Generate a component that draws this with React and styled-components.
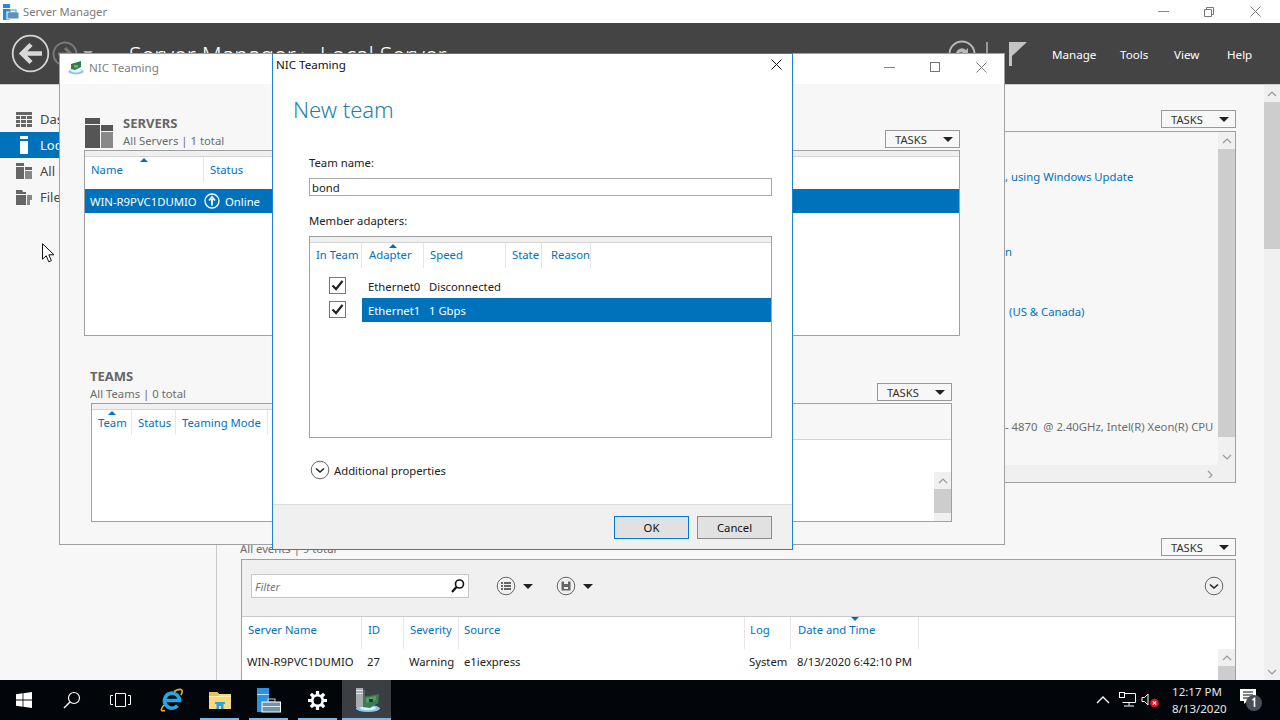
import React from "react";
import styled, { createGlobalStyle } from "styled-components";

const Global = createGlobalStyle`
  html, body { margin: 0; padding: 0; background: #f7f7f7; }
  * { box-sizing: border-box; }
  body { font-family: "Noto Sans", "Liberation Sans", sans-serif; font-size: 11.3px; color: #222; }
`;

const Screen = styled.div`position: relative; width: 1280px; height: 720px; overflow: hidden; display: flex; flex-direction: column;`;
const AppTitleBar = styled.div`height: 23px; background: #fff; display: flex; align-items: center; padding-left: 3px; color: #7a7a7a; font-size: 11.2px; gap: 4px; flex: none;`;
const WinControls = styled.div`margin-left: auto; display: flex; align-items: center; height: 100%; padding-right: ${p => p.$pr || 0}px;`;
const WinControl = styled.span`width: 46px; display: flex; justify-content: center; align-items: center; color: ${p => p.$c || "#777"};`;
const Header = styled.div`height: 62px; flex: none; background: #444; border-bottom: 1px solid #d0d0d0; display: flex; align-items: center; padding-left: 11px; color: #fff; position: relative;`;
const Crumb = styled.div`margin-left: 36px; font-size: 23px; font-weight: 300; color: #fff; white-space: nowrap; padding-top: 3px;`;
const HeaderTools = styled.div`margin-left: auto; display: flex; align-items: center; height: 100%;`;
const HeaderMenu = styled.span`font-size: 11.6px; color: #fff; width: ${p => p.$w}px; padding-top: 1px;`;
const Body = styled.div`flex: 1; min-height: 0; display: flex; background: #f7f7f7;`;
const Sidebar = styled.nav`width: 217px; flex: none; border-right: 1px solid #c8c8c8; padding-top: 21px; background: #f7f7f7;`;
const NavItem = styled.div`height: 26px; display: flex; align-items: center; padding-left: 16px; gap: 8px; font-size: 13px; white-space: nowrap; background: ${p => p.$on ? "#0072bc" : "transparent"}; color: ${p => p.$on ? "#fff" : "#444"};`;
const Content = styled.main`flex: 1; min-width: 0; overflow: hidden; padding: 25px 28px 0 24px; display: flex; flex-direction: column;`;
const TasksRow = styled.div`display: flex; justify-content: flex-end; align-items: flex-end;`;
const TasksBtn = styled.div`width: 75px; height: 18px; flex: none; border: 1px solid #999; display: flex; align-items: center; justify-content: space-between; padding: 0 6px 0 9px; font-size: 11.2px; color: #333; background: #f7f7f7;`;
const Caret = styled.i`display: inline-block; width: 0; height: 0; border-left: 5px solid transparent; border-right: 5px solid transparent; border-top: 5px solid ${p => p.$c || "#222"}; margin-left: ${p => p.$ml || 0}px;`;
const PropPanel = styled.section`margin-top: 3px; height: 352px; flex: none; border: 1px solid #a0a0a0; display: flex; flex-direction: column;`;
const PropMain = styled.div`flex: 1; min-height: 0; display: flex;`;
const PropText = styled.div`flex: 1; padding: 36px 0 0 763px; position: relative;`;
const PropLine = styled.div`height: ${p => p.$h}px; color: ${p => p.$c || "#0072bc"}; white-space: nowrap; line-height: 18px; padding-left: ${p => p.$pl || 0}px;`;
const HBar = styled.div`height: 17px; flex: none; background: #f0f0f0; display: flex; justify-content: flex-end; align-items: center; padding-right: 20px; color: #888;`;
const ScrollTrack = styled.div`width: ${p => p.$w || 17}px; flex: none; background: #f0f0f0; display: flex; flex-direction: column; margin-top: ${p => p.$mt || 0}px;`;
const ScrollBtn = styled.div`height: 17px; flex: none; display: flex; align-items: center; justify-content: center; color: #999;`;
const ScrollThumb = styled.div`height: ${p => p.$h}px; background: #cdcdcd; flex: none;`;
const ScrollGap = styled.div`flex: 1;`;
const EventsHead = styled.div`margin-top: 55px; display: flex; justify-content: space-between; align-items: flex-end; padding-bottom: 3px;`;
const Muted = styled.span`color: #6d6d6d; margin-left: -1px;`;
const EventPanel = styled.section`flex: 1; border: 1px solid #a0a0a0; border-bottom: none; display: flex; flex-direction: column; background: #fff; min-height: 0;`;
const EventToolbar = styled.div`height: 57px; flex: none; background: #f0f0f0; border-bottom: 1px solid #c8c8c8; display: flex; align-items: center; padding: 0 11px 4px 9px;`;
const FilterBox = styled.div`width: 218px; height: 24px; background: #fff; border: 1px solid #c8c8c8; display: flex; align-items: center; justify-content: space-between; padding: 0 2px 0 3px; font-style: italic; color: #777;`;
const ToolGroup = styled.div`display: flex; align-items: center; margin-left: ${p => p.$ml}px;`;
const EventBody = styled.div`flex: 1; display: flex; min-height: 0;`;
const EventTable = styled.div`flex: 1;`;
const HeadRow = styled.div`display: flex; height: ${p => p.$h || 25}px; background: #fff;`;
const Col = styled.div`position: relative; width: ${p => p.$w}px; flex: none; padding: ${p => p.$top || 5}px 0 0 ${p => p.$pl || 6}px; color: #0072bc; white-space: nowrap; border-right: ${p => p.$nosep ? "0" : "1px solid #e6e6e6"};
  &::before { content: ${p => p.$sort ? '""' : "none"}; position: absolute; left: ${p => p.$sx || 50}px; top: ${p => p.$down ? 0 : 1}px; border-left: 4px solid transparent; border-right: 4px solid transparent; ${p => p.$down ? "border-top: 4px solid #0072bc;" : "border-bottom: 4px solid #0072bc;"} }`;
const Row = styled.div`display: flex; margin-top: ${p => p.$mt || 0}px; height: 24px; align-items: center; background: ${p => p.$on ? "#0072bc" : "transparent"}; color: ${p => p.$on ? "#fff" : "#222"}; white-space: nowrap;`;
const Cell = styled.span`width: ${p => p.$w}px; flex: none; padding-left: ${p => p.$pl ?? 5}px; display: ${p => p.$flex ? "flex" : "block"}; align-items: center; gap: 5px;`;
const PageScroll = styled(ScrollTrack)`background: #f0f0f0; width: 16px;`;

const Taskbar = styled.footer`height: 40px; flex: none; background: #02060b; display: flex; align-items: stretch; color: #ddd;`;
const TaskBtn = styled.div`width: ${p => p.$w || 48}px; margin-right: ${p => p.$mr || 0}px; flex: none; display: flex; align-items: center; justify-content: center; position: relative; background: ${p => p.$active ? "#3b3f44" : "transparent"};
  &::after { content: ${p => p.$run ? '""' : "none"}; position: absolute; bottom: 0; left: ${p => p.$active ? 0 : 5}px; right: ${p => p.$active ? 0 : 5}px; height: 2px; background: #76b9ed; }`;
const Tray = styled.div`margin-left: auto; display: flex; align-items: center;`;
const TrayIcon = styled.span`width: ${p => p.$w || 24}px; display: flex; justify-content: center; align-items: center;`;
const Clock = styled.div`width: 50px; text-align: center; font-size: 11.5px; line-height: 17px; color: #e6e6e6; margin-left: 9px; white-space: nowrap;`;

const NicWindow = styled.section`position: absolute; left: 59px; top: 53px; width: 946px; height: 492px; background: #f7f7f7; border: 1px solid #a0a0a0; display: flex; flex-direction: column;`;
const NicTitle = styled.div`height: 30px; flex: none; background: #fff; display: flex; align-items: center; padding: 0 0 4px 8px; gap: 5px; color: #808080; font-size: 11.6px;`;
const NicBody = styled.div`flex: 1; display: flex; flex-direction: column; padding: 30px 44px 0 24px;`;
const GroupHead = styled.div`display: flex; align-items: flex-end; height: 34px; padding-left: ${p => p.$pl || 0}px; padding-right: ${p => p.$pr || 0}px;`;
const GroupTitles = styled.div`margin-left: 10px; margin-bottom: -2px;`;
const GroupPlain = styled.div`margin-bottom: -2px;`;
const GroupName = styled.div`font-weight: 700; font-size: 13px; line-height: 18px; color: #666;`;
const GroupSub = styled.div`color: #6d6d6d; line-height: 18px; white-space: nowrap;`;
const Spacer = styled.div`flex: 1;`;
const ListBox = styled.div`border: 1px solid #a0a0a0; background: #fff; height: ${p => p.$h}px; margin-top: ${p => p.$mt || 0}px; margin-left: ${p => p.$ml || 0}px; margin-right: ${p => p.$mr || 0}px; display: flex; flex-direction: column; overflow: hidden;`;
const Band = styled.div`height: 6px; flex: none; background: #f0f0f0; border-bottom: 1px solid #d4d4d4;`;
const TeamsHead = styled.div`margin-top: 31px;`;
const TeamsInner = styled.div`flex: 1; display: flex; min-height: 0;`;
const TeamsLeft = styled.div`flex: 1;`;
const TeamsRight = styled.div`width: 158px; flex: none; display: flex; flex-direction: column; background: #fff;`;
const TeamsStrip = styled.div`height: 36px; background: #f7f7f7; border-bottom: 1px solid #d4d4d4;`;
const TeamsScroll = styled.div`margin-left: auto; margin-top: auto; width: 17px; height: 49px; background: #f0f0f0; display: flex; flex-direction: column;`;

const Dialog = styled.section`position: absolute; left: 272px; top: 53px; width: 521px; height: 497px; background: #fff; border: 1px solid #1b83d4; display: flex; flex-direction: column;`;
const DialogTitle = styled.div`height: 23px; flex: none; display: flex; align-items: center; justify-content: space-between; padding: 0 10px 2px 3px; color: #111; font-size: 11.6px;`;
const DialogHeading = styled.h1`margin: 17px 0 0 20px; font-size: 22px; line-height: 30px; font-weight: 300; color: #1f7fa8;`;
const DialogForm = styled.div`flex: 1; padding: 30px 20px 0 36px;`;
const FieldLabel = styled.div`line-height: 18px; margin-bottom: ${p => p.$mb}px; color: #222;`;
const TextField = styled.div`height: 18px; border: 1px solid #a8a8a8; line-height: 16px; padding: 1px 0 0 2px; margin-bottom: 16px;`;
const AdapterList = styled(ListBox)`margin-bottom: 22px;`;
const AdapterRow = styled.div`display: flex; align-items: center; height: 24px; margin-top: ${p => p.$mt || 0}px;`;
const CheckCell = styled.div`width: 52px; flex: none; display: flex; justify-content: center; padding: 0 0 2px 2px;`;
const CheckBox = styled.span`width: 17px; height: 17px; border: 1px solid #777; background: #fff; display: flex; align-items: center; justify-content: center;`;
const AdapterData = styled.div`flex: 1; height: 100%; display: flex; align-items: center; background: ${p => p.$on ? "#0072bc" : "transparent"}; color: ${p => p.$on ? "#fff" : "#222"};`;
const AdapterName = styled.span`width: 67px; padding-left: 6px;`;
const Expander = styled.div`display: flex; align-items: center; gap: 4px; padding-left: 1px;`;
const DialogFooter = styled.div`height: 45px; flex: none; background: #f0f0f0; border-top: 1px solid #dcdcdc; display: flex; justify-content: flex-end; align-items: center; gap: 8px; padding: 0 20px 0 0;`;
const DlgButton = styled.button`width: 75px; height: 23px; background: #e1e1e1; border: 1px solid ${p => p.$primary ? "#0078d7" : "#8a8a8a"}; font: inherit; color: #111; padding: 0;`;
const Cursor = styled.svg`position: absolute; left: 42px; top: 243px;`;

const Chev = ({ d = "up", c = "#999" }) => {
  const p = { up: "M1 6l4-4 4 4", down: "M1 2l4 4 4-4", right: "M3 1l4 4-4 4" }[d];
  return <svg width="10" height="8" viewBox="0 0 10 8"><path d={p} fill="none" stroke={c} strokeWidth="1.2" /></svg>;
};
const VScroll = ({ thumb }) => (
  <>
    <ScrollBtn><Chev /></ScrollBtn>
    <ScrollThumb $h={thumb} />
    <ScrollGap />
    <ScrollBtn><Chev d="down" /></ScrollBtn>
  </>
);
const Tasks = () => <TasksBtn>TASKS<Caret /></TasksBtn>;

const ServersIcon = () => (
  <svg width="28" height="30" viewBox="0 0 28 30" style={{ flex: "none", marginLeft: 1 }}>
    <rect x="0" y="0" width="15" height="6" fill="#555" />
    <rect x="0" y="7" width="15" height="23" fill="#555" />
    <rect x="16" y="7" width="12" height="6" fill="#555" />
    <rect x="16" y="14" width="12" height="16" fill="#888" />
  </svg>
);
const NicIcon = () => (
  <svg width="16" height="16" viewBox="0 0 16 16" style={{ flex: "none" }}>
    <ellipse cx="8" cy="12.500" rx="7.500" ry="3" fill="#8cc6ea" />
    <ellipse cx="8" cy="11.500" rx="5.500" ry="2" fill="#e8f4fb" />
    <path d="M3 10V5l10-3v6l-6 3z" fill="#2f7d4a" />
    <rect x="6" y="6" width="4" height="2.500" fill="#7fb24e" />
  </svg>
);
const SmTitleIcon = () => (
  <svg width="16" height="16" viewBox="0 0 16 16" style={{ flex: "none" }}>
    <rect x="0" y="0" width="7" height="16" fill="#2b88d8" />
    <rect x="0" y="4" width="7" height="1" fill="#fff" />
    <rect x="4" y="8" width="12" height="7" fill="#5a93bd" stroke="#fff" strokeWidth="1" />
    <rect x="7" y="6" width="6" height="3" fill="none" stroke="#5a93bd" />
  </svg>
);
const Back = () => (
  <svg width="39" height="39" viewBox="0 0 39 39" style={{ flex: "none" }}>
    <circle cx="19.500" cy="19.500" r="17.800" fill="none" stroke="#d4d4d4" strokeWidth="1.800" />
    <path d="M31 19.500H12M20 10.500l-9 9 9 9" fill="none" stroke="#d8d8d8" strokeWidth="4.500" />
  </svg>
);
const Forward = () => (
  <svg width="26" height="26" viewBox="0 0 26 26" style={{ flex: "none", marginLeft: 2 }}>
    <circle cx="13" cy="13" r="11.500" fill="none" stroke="#777" strokeWidth="2" />
    <path d="M6 13h12M13 7l6 6-6 6" fill="none" stroke="#777" strokeWidth="3" />
  </svg>
);
const Refresh = () => (
  <svg width="28" height="28" viewBox="0 0 28 28">
    <circle cx="14" cy="14" r="12.500" fill="none" stroke="#b8b8b8" strokeWidth="2" />
    <path d="M8 15a6 6 0 0 1 10-5l2-2v7h-7l2-2a3 3 0 0 0-5 2z" fill="#b8b8b8" />
  </svg>
);
const Flag = () => (
  <svg width="18" height="24" viewBox="0 0 18 24">
    <rect x="0" y="0" width="3" height="24" fill="#c4c4c4" />
    <path d="M3 0h15l-15 14z" fill="#c4c4c4" />
  </svg>
);
const NavIcon = ({ kind, on }) => {
  const c = on ? "#fff" : "#666";
  if (kind === "dash") return <svg width="16" height="15" viewBox="0 0 16 15" style={{ flex: "none" }}><path d="M0 0h16v3H0zM0 4h4v3H0zM5 4h5v3H5zM11 4h5v3h-5zM0 8h4v3H0zM5 8h5v3H5zM11 8h5v3h-5zM0 12h4v3H0zM5 12h5v3H5zM11 12h5v3h-5z" fill={c} /></svg>;
  if (kind === "local") return <svg width="16" height="18" viewBox="0 0 16 18" style={{ flex: "none" }}><path d="M4 0h8v3H4zM4 5h8v13H4z" fill={c} /></svg>;
  if (kind === "all") return <svg width="16" height="16" viewBox="0 0 16 16" style={{ flex: "none" }}><path d="M0 0h8v3H0zM0 4h8v12H0zM9 4h7v3H9z" fill={c} /><path d="M9 8h7v8H9z" fill="#888" /></svg>;
  return <svg width="16" height="15" viewBox="0 0 16 15" style={{ flex: "none" }}><path d="M0 0h6l1 2h3v2H0z" fill={c} /><path d="M0 5h10v10H0z" fill={c} /><path d="M11 5h5v5h-2v5h-3z" fill="#888" /></svg>;
};
const RoundIcon = ({ kind }) => (
  <svg width="20" height="20" viewBox="0 0 20 20" style={{ flex: "none" }}>
    <circle cx="10" cy="10" r="8.800" fill="none" stroke="#666" strokeWidth="1" />
    {kind === "list" && <path d="M5 6h2v2H5zM8 6h7v2H8zM5 9h2v2H5zM8 9h7v2H8zM5 12h2v2H5zM8 12h7v2H8z" fill="#666" />}
    {kind === "save" && <path d="M5.500 5.500h9v9h-9zM8 5.500v2.500h4V5.500zM8 11v2h4v-2z" fill="#666" fillRule="evenodd" />}
    {kind === "down" && <path d="M6 8.500l4 3.500 4-3.500" fill="none" stroke="#222" strokeWidth="1.600" />}
  </svg>
);
const UpCircle = () => (
  <svg width="16" height="16" viewBox="0 0 16 16" style={{ flex: "none" }}>
    <circle cx="8" cy="8" r="7" fill="none" stroke="#fff" strokeWidth="1.300" />
    <path d="M8 12.500V6M5 7.500L8 4l3 3.500" fill="none" stroke="#fff" strokeWidth="1.800" />
  </svg>
);
const Search = () => (
  <svg width="16" height="16" viewBox="0 0 16 16"><circle cx="9.500" cy="6" r="4" fill="none" stroke="#111" strokeWidth="1.600" /><path d="M6.500 9L2 14" stroke="#111" strokeWidth="2.200" /></svg>
);
const Check = () => (
  <svg width="13" height="11" viewBox="0 0 13 11"><path d="M1.500 5.500l3.500 3.500 6.500-8" fill="none" stroke="#222" strokeWidth="2.200" /></svg>
);
const WinLogo = () => (
  <svg width="16" height="16" viewBox="0 0 16 16"><path d="M0 2.200l6.600-.9v6.300H0zM7.400 1.200L16 0v7.600H7.400zM0 8.400h6.600v6.300L0 13.800zM7.400 8.400H16V16l-8.600-1.200z" fill="#fff" /></svg>
);
const TaskSearch = () => (
  <svg width="18" height="18" viewBox="0 0 18 18"><circle cx="11" cy="7" r="5.500" fill="none" stroke="#fff" strokeWidth="1.200" /><path d="M7 11l-6 6" stroke="#fff" strokeWidth="1.400" /></svg>
);
const TaskView = () => (
  <svg width="21" height="14" viewBox="0 0 21 14"><path d="M5.500.5h10v13h-10z" fill="none" stroke="#fff" /><path d="M3 2.500H.5v9H3M18 2.500h2.500v9H18" fill="none" stroke="#fff" /></svg>
);
const IeIcon = () => (
  <svg width="24" height="24" viewBox="0 0 24 24">
    <path d="M6.500 12.500H20.500A7.500 7.500 0 1 0 18.500 17.800" fill="none" stroke="#22a8e6" strokeWidth="3.600" />
    <path d="M5 17C1.500 21 1 24 6 22.500M15 3.500C20 .5 24 .5 23 4.500c-.2 1-.6 1.800-1 2.500" fill="none" stroke="#e8b020" strokeWidth="1.600" />
  </svg>
);
const FolderIcon = () => (
  <svg width="22" height="19" viewBox="0 0 22 19">
    <path d="M0 1h8l2 2h12v15H0z" fill="#f7d97f" />
    <path d="M0 1h8l2 2v2H0z" fill="#e9c05a" />
    <path d="M0 5h22v1H0z" fill="#fdeeb5" />
    <path d="M6 11h10v2h-1.500v5h-2.500v-3H10v3H7.500v-5H6z" fill="#2aa3e0" />
  </svg>
);
const SmTaskIcon = () => (
  <svg width="24" height="25" viewBox="0 0 24 25">
    <rect x="0" y="0" width="12" height="24" fill="#2b94de" />
    <rect x="0" y="6" width="12" height="1" fill="#bfe0f7" />
    <rect x="5" y="14" width="18.500" height="10" fill="#6f95ad" stroke="#fff" strokeWidth="1" />
    <rect x="11" y="11" width="7" height="3" fill="none" stroke="#ccc" />
    <rect x="5" y="18" width="18.500" height="1" fill="#dfe9ef" />
  </svg>
);
const GearIcon = () => (
  <svg width="19" height="19" viewBox="0 0 20 20">
    <circle cx="10" cy="10" r="5.500" fill="none" stroke="#fff" strokeWidth="2.800" />
    <path d="M10 0v4M10 16v4M0 10h4M16 10h4M3 3l2.800 2.800M14.200 14.200L17 17M17 3l-2.800 2.800M5.800 14.200L3 17" stroke="#fff" strokeWidth="3.400" />
  </svg>
);
const NicTaskIcon = () => (
  <svg width="26" height="26" viewBox="0 0 26 26">
    <ellipse cx="14" cy="21.500" rx="12" ry="3.500" fill="#8cc6ea" />
    <ellipse cx="14" cy="21" rx="8" ry="2" fill="#dfeffa" />
    <rect x="2" y="1" width="7" height="19" fill="#a9adb0" />
    <rect x="2" y="3" width="7" height="1" fill="#e4e4e4" />
    <rect x="2" y="6" width="7" height="1" fill="#e4e4e4" />
    <path d="M9 2l2 1.500V19L9 20z" fill="#5f6366" />
    <path d="M9 20V10l16-3-1 9-8 5z" fill="#3a7d50" />
    <path d="M12 11l10-2v4l-10 3z" fill="#5a9a63" />
    <rect x="15" y="12" width="4" height="3" fill="#233c2b" />
  </svg>
);
const NetworkIcon = () => (
  <svg width="17" height="16" viewBox="0 0 17 16"><path d="M3.500 1.500H16.500v9H3.500M10 10.500v3M5 14h10" fill="none" stroke="#fff" /><rect x=".5" y=".5" width="5" height="5" fill="#02060b" stroke="#fff" /></svg>
);
const SpeakerIcon = () => (
  <svg width="20" height="16" viewBox="0 0 20 16">
    <path d="M1 5.500h2.500L7 2v11L3.500 9.500H1z" fill="none" stroke="#fff" />
    <circle cx="13.500" cy="11" r="4.300" fill="#e81123" />
    <path d="M11.800 9.300l3.400 3.400M15.200 9.300l-3.400 3.400" stroke="#fff" strokeWidth="1.200" />
  </svg>
);
const NotifyIcon = () => (
  <svg width="24" height="24" viewBox="0 0 24 24">
    <path d="M1 1h16v12H8l-3 3v-3H1z" fill="#fff" />
    <path d="M4 4h10M4 7h10M4 10h7" stroke="#02060b" />
    <circle cx="15" cy="15" r="8" fill="#4a4f55" />
    <path d="M13.500 12l2-1.500V19" fill="none" stroke="#fff" strokeWidth="1.600" />
  </svg>
);
const CloseX = ({ c = "#777", s = 11 }) => (
  <svg width={s} height={s} viewBox="0 0 11 11"><path d="M.5.500l10 10M10.500.500l-10 10" stroke={c} /></svg>
);

export default function App() {
  return (
    <Screen>
      <Global />
      <AppTitleBar>
        <SmTitleIcon />Server Manager
        <WinControls $pr={2}>
          <WinControl><svg width="11" height="1"><rect width="11" height="1" fill="#888" /></svg></WinControl>
          <WinControl><svg width="10" height="10" viewBox="0 0 10 10"><path d="M.5 2.500h7v7h-7zM2.500 2.500v-2h7v7h-2" fill="none" stroke="#777" /></svg></WinControl>
          <WinControl><CloseX /></WinControl>
        </WinControls>
      </AppTitleBar>
      <Header>
        <Back />
        <Forward />
        <Caret $c="#aaa" $ml={5} />
        <Crumb>Server Manager ▸ Local Server</Crumb>
        <HeaderTools>
          <Refresh />
          <svg width="33" height="24" viewBox="0 0 33 24"><rect x="10" y="0" width="2" height="22" fill="#999" /></svg>
          <Flag />
          <span style={{ width: 25 }} />
          <HeaderMenu $w={68}>Manage</HeaderMenu>
          <HeaderMenu $w={54}>Tools</HeaderMenu>
          <HeaderMenu $w={53}>View</HeaderMenu>
          <HeaderMenu $w={53}>Help</HeaderMenu>
        </HeaderTools>
      </Header>
      <Body>
        <Sidebar>
          <NavItem><NavIcon kind="dash" />Dashboard</NavItem>
          <NavItem $on><NavIcon kind="local" on />Local Server</NavItem>
          <NavItem><NavIcon kind="all" />All Servers</NavItem>
          <NavItem><NavIcon kind="file" />File and Storage Services</NavItem>
        </Sidebar>
        <Content>
          <TasksRow><Tasks /></TasksRow>
          <PropPanel>
            <PropMain>
              <PropText>
                <PropLine $h={75}>, using Windows Update</PropLine>
                <PropLine $h={60}>n</PropLine>
                <PropLine $h={115} $pl={4}>(US &amp; Canada)</PropLine>
                <PropLine $h={18} $c="#6d6d6d">- 4870&nbsp; @ 2.40GHz, Intel(R) Xeon(R) CPU</PropLine>
              </PropText>
              <ScrollTrack><VScroll thumb={288} /></ScrollTrack>
            </PropMain>
            <HBar><Chev d="right" /></HBar>
          </PropPanel>
          <EventsHead><Muted>All events | 9 total</Muted><Tasks /></EventsHead>
          <EventPanel>
            <EventToolbar>
              <FilterBox>Filter<Search /></FilterBox>
              <ToolGroup $ml={27}><RoundIcon kind="list" /><Caret $ml={7} /></ToolGroup>
              <ToolGroup $ml={23}><RoundIcon kind="save" /><Caret $ml={7} /></ToolGroup>
              <Spacer />
              <RoundIcon kind="down" />
            </EventToolbar>
            <EventBody>
              <EventTable>
                <HeadRow $h={32}>
                  <Col $w={120} $pl={6}>Server Name</Col>
                  <Col $w={42} $pl={6}>ID</Col>
                  <Col $w={55} $pl={6}>Severity</Col>
                  <Col $w={286} $pl={5}>Source</Col>
                  <Col $w={46} $pl={5}>Log</Col>
                  <Col $w={128} $pl={7} $sort $down $sx={60}>Date and Time</Col>
                </HeadRow>
                <Row>
                  <Cell $w={120}>WIN-R9PVC1DUMIO</Cell>
                  <Cell $w={42}>27</Cell>
                  <Cell $w={55}>Warning</Cell>
                  <Cell $w={286}>e1iexpress</Cell>
                  <Cell $w={46} $pl={4}>System</Cell>
                  <Cell $w={170} $pl={6}>8/13/2020 6:42:10 PM</Cell>
                </Row>
              </EventTable>
              <ScrollTrack $mt={32}><ScrollBtn><Chev /></ScrollBtn><ScrollThumb $h={30} /></ScrollTrack>
            </EventBody>
          </EventPanel>
        </Content>
        <PageScroll><VScroll thumb={147} /></PageScroll>
      </Body>
      <Taskbar>
        <TaskBtn><WinLogo /></TaskBtn>
        <TaskBtn><TaskSearch /></TaskBtn>
        <TaskBtn $mr={2}><TaskView /></TaskBtn>
        <TaskBtn $w={49}><IeIcon /></TaskBtn>
        <TaskBtn $w={49} $run><FolderIcon /></TaskBtn>
        <TaskBtn $w={49} $run><SmTaskIcon /></TaskBtn>
        <TaskBtn $w={49} $run><GearIcon /></TaskBtn>
        <TaskBtn $w={49} $run $active><NicTaskIcon /></TaskBtn>
        <Tray>
          <TrayIcon><svg width="14" height="8" viewBox="0 0 14 8"><path d="M1 7l6-6 6 6" fill="none" stroke="#fff" strokeWidth="1.300" /></svg></TrayIcon>
          <TrayIcon><NetworkIcon /></TrayIcon>
          <TrayIcon><SpeakerIcon /></TrayIcon>
          <Clock>12:17 PM<br />8/13/2020</Clock>
          <TrayIcon $w={58}><NotifyIcon /></TrayIcon>
        </Tray>
      </Taskbar>

      <NicWindow>
        <NicTitle>
          <NicIcon />NIC Teaming
          <WinControls>
            <WinControl><svg width="11" height="1"><rect width="11" height="1" fill="#888" /></svg></WinControl>
            <WinControl><svg width="10" height="10"><rect x=".5" y=".5" width="9" height="9" fill="none" stroke="#777" /></svg></WinControl>
            <WinControl><CloseX /></WinControl>
          </WinControls>
        </NicTitle>
        <NicBody>
          <GroupHead>
            <ServersIcon />
            <GroupTitles>
              <GroupName>SERVERS</GroupName>
              <GroupSub>All Servers | 1 total</GroupSub>
            </GroupTitles>
            <Spacer />
            <Tasks />
          </GroupHead>
          <ListBox $h={186} $mt={2}>
            <Band />
            <HeadRow>
              <Col $w={119} $pl={6} $sort $sx={55}>Name</Col>
              <Col $w={70} $pl={6} $nosep>Status</Col>
            </HeadRow>
            <Row $mt={7} $on>
              <Cell $w={119}>WIN-R9PVC1DUMIO</Cell>
              <Cell $w={80} $pl={0} $flex><UpCircle />Online</Cell>
            </Row>
          </ListBox>
          <TeamsHead>
            <GroupHead $pl={6} $pr={8}>
              <GroupPlain>
                <GroupName>TEAMS</GroupName>
                <GroupSub>All Teams | 0 total</GroupSub>
              </GroupPlain>
              <Spacer />
              <Tasks />
            </GroupHead>
            <ListBox $h={119} $mt={2} $ml={7} $mr={8}>
              <TeamsInner>
                <TeamsLeft>
                  <Band />
                  <HeadRow>
                    <Col $w={40} $pl={6} $sort $sx={16}>Team</Col>
                    <Col $w={44} $pl={6}>Status</Col>
                    <Col $w={92} $pl={6}>Teaming Mode</Col>
                  </HeadRow>
                </TeamsLeft>
                <TeamsRight>
                  <TeamsStrip />
                  <TeamsScroll>
                    <ScrollBtn><Chev /></ScrollBtn>
                    <ScrollThumb $h={24} />
                  </TeamsScroll>
                </TeamsRight>
              </TeamsInner>
            </ListBox>
          </TeamsHead>
        </NicBody>
      </NicWindow>

      <Dialog>
        <DialogTitle>NIC Teaming<CloseX c="#111" /></DialogTitle>
        <DialogHeading>New team</DialogHeading>
        <DialogForm>
          <FieldLabel $mb={6}>Team name:</FieldLabel>
          <TextField>bond</TextField>
          <FieldLabel $mb={6}>Member adapters:</FieldLabel>
          <AdapterList $h={202}>
            <Band />
            <HeadRow>
              <Col $w={52} $pl={6} $top={4}>In Team</Col>
              <Col $w={62} $pl={7} $top={4} $sort $sx={27}>Adapter</Col>
              <Col $w={82} $pl={6} $top={4}>Speed</Col>
              <Col $w={36} $pl={6} $top={4}>State</Col>
              <Col $w={49} $pl={9} $top={4}>Reason</Col>
            </HeadRow>
            <AdapterRow $mt={6}>
              <CheckCell><CheckBox><Check /></CheckBox></CheckCell>
              <AdapterData><AdapterName>Ethernet0</AdapterName>Disconnected</AdapterData>
            </AdapterRow>
            <AdapterRow>
              <CheckCell><CheckBox><Check /></CheckBox></CheckCell>
              <AdapterData $on><AdapterName>Ethernet1</AdapterName>1 Gbps</AdapterData>
            </AdapterRow>
          </AdapterList>
          <Expander><RoundIcon kind="down" />Additional properties</Expander>
        </DialogForm>
        <DialogFooter>
          <DlgButton $primary>OK</DlgButton>
          <DlgButton>Cancel</DlgButton>
        </DialogFooter>
      </Dialog>

      <Cursor width="13" height="20" viewBox="0 0 13 20">
        <path d="M.5.700v15.500l3.700-3.400 2.600 6 2.600-1.100-2.600-5.900h5.200z" fill="#fff" stroke="#111" />
      </Cursor>
    </Screen>
  );
}
